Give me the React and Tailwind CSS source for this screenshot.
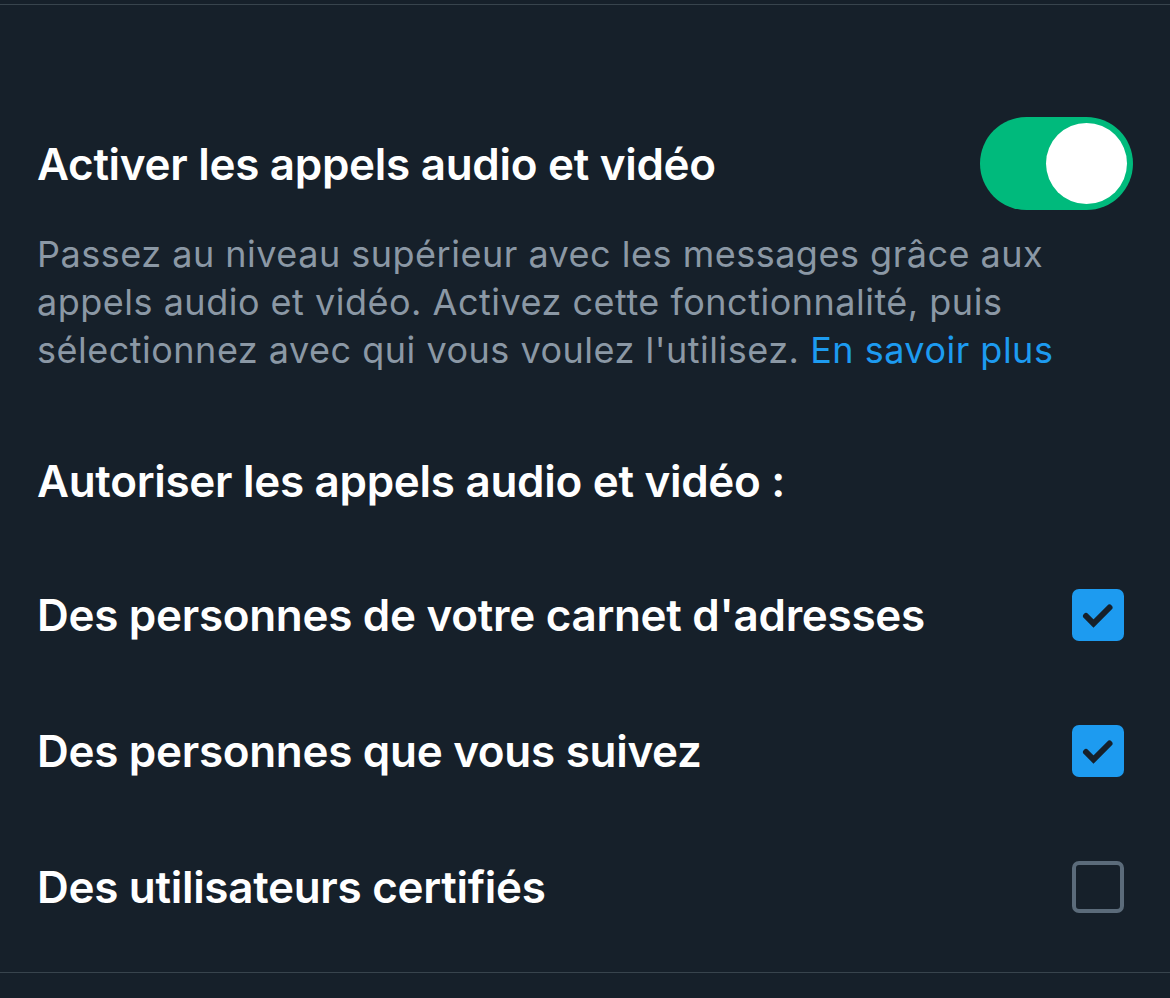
import { useState } from 'react'

// Réglages des appels audio/vidéo — écran de paramètres (thème sombre)
const rows = [
  { label: "Des personnes de votre carnet d'adresses", on: true },
  { label: 'Des personnes que vous suivez', on: true },
  { label: 'Des utilisateurs certifiés', on: false },
]

function Check({ on, onClick }) {
  if (!on) {
    return <button onClick={onClick} className="w-[52px] h-[52px] rounded-[7px] border-[4px] border-[#5b6b7a] shrink-0" />
  }
  return (
    <button onClick={onClick} className="w-[52px] h-[52px] rounded-[7px] bg-[#1d9bf0] shrink-0">
      <svg viewBox="0 0 52 52" className="w-[52px] h-[52px]" fill="none" stroke="#16202a" strokeWidth="6" strokeLinecap="round" strokeLinejoin="miter">
        <path d="M14 27l7.5 7.5L37.5 18.5" />
      </svg>
    </button>
  )
}

export default function App() {
  const [enabled, setEnabled] = useState(true)
  const [checks, setChecks] = useState(rows.map((r) => r.on))

  return (
    <div className="w-[1170px] h-[998px] bg-[#16202a] overflow-hidden" style={{ fontFamily: 'Inter, "Noto Sans", sans-serif' }}>
      <div className="h-[4px]" />
      <div className="h-px bg-[#38444d]" />

      <div className="pl-[37px] pr-[37px] pt-[112px] flex items-center justify-between">
        <h2 className="text-[44px] leading-[48px] font-semibold text-white tracking-[-0.3px]">Activer les appels audio et vidéo</h2>
        <button onClick={() => setEnabled(!enabled)} className={`w-[153px] h-[93px] rounded-full p-[6px] flex items-center ${enabled ? 'bg-[#00ba7c] justify-end' : 'bg-[#3e4a55] justify-start'}`}>
          <span className="w-[81px] h-[81px] rounded-full bg-white" />
        </button>
      </div>

      <p className="pl-[37px] mt-[20px] text-[36px] leading-[48px] text-[#8b98a5] tracking-[0.5px] whitespace-nowrap">
        Passez au niveau supérieur avec les messages grâce aux<br />
        appels audio et vidéo. Activez cette fonctionnalité, puis<br />
        sélectionnez avec qui vous voulez l'utilisez. <span className="text-[#1d9bf0]">En savoir plus</span>
      </p>

      <h3 className="pl-[37px] mt-[79px] text-[44px] leading-[56px] font-semibold text-white tracking-[-0.3px]">Autoriser les appels audio et vidéo :</h3>

      <div className="mt-[38px]">
        {rows.map((r, i) => (
          <div key={i} className="h-[136px] pl-[37px] pr-[46px] flex items-center justify-between">
            <span className="text-[44px] font-semibold text-white tracking-[-0.3px]">{r.label}</span>
            <Check on={checks[i]} onClick={() => setChecks(checks.map((c, j) => (j === i ? !c : c)))} />
          </div>
        ))}
      </div>

      <div className="mt-[17px] h-px bg-[#38444d]" />
    </div>
  )
}
